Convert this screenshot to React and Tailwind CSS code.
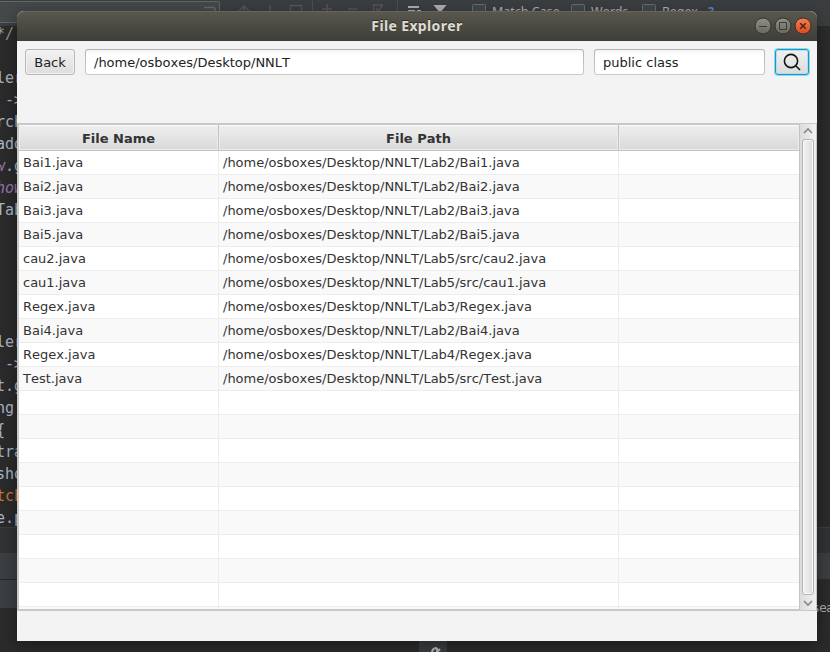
import React from "react";

const codeLines = [
  ["*/", "text-[#8f9a8c]"],
  ["", ""],
  ["ler", "text-[#a9b7c6]"],
  [" ->", "text-[#a9b7c6]"],
  ["rch", "text-[#a9b7c6]"],
  ["add", "text-[#a9b7c6]"],
  ["w.g", "text-[#a9b7c6]", "text-[#9876aa]"],
  ["how", "text-[#9876aa] italic"],
  ["Tab", "text-[#a9b7c6]"],
  ["", ""],
  ["", ""],
  ["", ""],
  ["", ""],
  ["", ""],
  ["ler", "text-[#a9b7c6]"],
  [" ->", "text-[#a9b7c6]"],
  ["t.g", "text-[#a9b7c6]"],
  ["ng", "text-[#a9b7c6]"],
  ["{", "text-[#a9b7c6]"],
  ["tra", "text-[#a9b7c6]"],
  ["sho", "text-[#a9b7c6]"],
  ["tch", "text-[#cc7832]"],
  ["e.p", "text-[#a9b7c6]"],
];

const files = [
  ["Bai1.java", "/home/osboxes/Desktop/NNLT/Lab2/Bai1.java"],
  ["Bai2.java", "/home/osboxes/Desktop/NNLT/Lab2/Bai2.java"],
  ["Bai3.java", "/home/osboxes/Desktop/NNLT/Lab2/Bai3.java"],
  ["Bai5.java", "/home/osboxes/Desktop/NNLT/Lab2/Bai5.java"],
  ["cau2.java", "/home/osboxes/Desktop/NNLT/Lab5/src/cau2.java"],
  ["cau1.java", "/home/osboxes/Desktop/NNLT/Lab5/src/cau1.java"],
  ["Regex.java", "/home/osboxes/Desktop/NNLT/Lab3/Regex.java"],
  ["Bai4.java", "/home/osboxes/Desktop/NNLT/Lab2/Bai4.java"],
  ["Regex.java", "/home/osboxes/Desktop/NNLT/Lab4/Regex.java"],
  ["Test.java", "/home/osboxes/Desktop/NNLT/Lab5/src/Test.java"],
];
const rows = Array.from({ length: 20 }, (_, i) => files[i] || ["", ""]);

function EditorToolbar() {
  return (
    <div className="relative h-[26px] bg-[#3c3f41]">
      <div className="h-[22px] w-[220px] translate-y-px rounded-r-[2px] border border-l-0 border-[#646769] bg-[#45494a]" />
      <svg className="absolute inset-0" width="830" height="26" fill="none" stroke="#55585a" strokeWidth="1.5">
        <path d="M204 7.5h9q2 0 2 2v4" stroke="#686b6d" />
        <path d="M244 14V6m-5 5 5-5 5 5M270 5v9M290.500 14V5.500h11V14M327 4v9M322 9h10M348 9h10M382 6.500V5h-8.500v9M376 8l2 3 5-6" />
        <path d="M312.500 1v12M397.500 1v12" stroke="#505355" strokeWidth="1" />
        <path d="M408 7h11M408 11h7M417 11h4" stroke="#afb1b3" strokeWidth="2" />
        <path d="M433.500 5h13l-6.500 8z" fill="#afb1b3" stroke="none" />
        <g fill="#43494a" stroke="#6b6e70" strokeWidth="1">
          <rect x="472.500" y="4.500" width="13" height="13" rx="1" />
          <rect x="571.500" y="4.500" width="13" height="13" rx="1" />
          <rect x="642.500" y="4.500" width="13" height="13" rx="1" />
        </g>
      </svg>
      <div className="absolute left-[492px] top-[4px] flex whitespace-nowrap font-['Noto_Sans'] text-[12.5px] leading-[16px] text-[#b0b2b3]">
        <span className="w-[99px]">Match Case</span>
        <span className="w-[71px]">Words</span>
        <span className="w-[46px]">Regex</span>
        <span className="font-bold text-[#4a88d8]">?</span>
      </div>
    </div>
  );
}

function Editor() {
  return (
    <div className="flex h-[652px] w-[830px] flex-col bg-[#2b2b2b]">
      <EditorToolbar />
      <div className="h-[501px] w-[60px]">
        <div className="-ml-1 -mt-[3px] font-['DejaVu_Sans_Mono'] text-[15px] leading-[22px]">
          {codeLines.map(([text, color, first], i) => (
            <div key={i} className={`h-[22px] whitespace-pre ${color}`}>
              {first ? (
                <>
                  <span className={`italic ${first}`}>{text[0]}</span>
                  {text.slice(1)}
                </>
              ) : (
                text
              )}
            </div>
          ))}
        </div>
      </div>
      <div className="h-[26px] border-t border-[#3e3e3e] bg-[#313335]" />
      <div className="h-[26px] bg-[#3c4043]" />
      <div className="flex h-[29px]">
        <div className="w-[100px] border-t border-[#292929] bg-[#3c4043]" />
        <div className="flex-1 bg-[#2b2b2b]" />
      </div>
      <div className="flex h-[44px] justify-center pl-[36px]">
        <div className="flex w-[28px] justify-center bg-[#3b3e40] pl-[6px] pt-[39px]">
          <svg width="10" height="12" viewBox="0 0 10 12" fill="none" stroke="#b5b6b7" strokeWidth="2">
            <path d="M6 1Q1 1 1 6v5M6 1v3M9 2 6 5l2 2" />
          </svg>
        </div>
      </div>
      <span className="absolute left-[812px] top-[599px] font-['DejaVu_Sans_Mono'] text-[13px] leading-[18px] tracking-[-0.8px] text-[#a9adb0]">
        sea
      </span>
    </div>
  );
}

function TitleBar() {
  return (
    <div className="relative flex h-[30px] items-center justify-center rounded-t-[7px] border-t border-[#67655a] bg-linear-to-b from-[#59574d] to-[#3e3d38] pb-[2px]">
      <span className="font-['Noto_Sans'] text-[14px] font-bold leading-[18px] tracking-[0.36px] text-[#dfdbd2] [text-shadow:0_-1px_0_#2b2a26]">
        File Explorer
      </span>
      <svg className="absolute right-[5px] top-[5px]" width="58" height="18" fill="none">
        <defs>
          <linearGradient id="grey" x1="0" y1="0" x2="0" y2="1">
            <stop offset="0" stopColor="#918f88" />
            <stop offset="1" stopColor="#67665f" />
          </linearGradient>
          <linearGradient id="orange" x1="0" y1="0" x2="0" y2="1">
            <stop offset="0" stopColor="#f37e5a" />
            <stop offset="1" stopColor="#de4816" />
          </linearGradient>
        </defs>
        <circle cx="9" cy="9" r="8" fill="url(#grey)" stroke="#34332e" />
        <circle cx="29" cy="9" r="8" fill="url(#grey)" stroke="#34332e" />
        <circle cx="49" cy="9" r="8" fill="url(#orange)" stroke="#34332e" />
        <path d="M5 9.500h8M25.500 5.500h7v7h-7z" stroke="#3b3a35" />
        <path d="m46.200 6.200 5.600 5.600m0-5.600-5.600 5.600" stroke="#4a2718" strokeWidth="1.500" />
      </svg>
    </div>
  );
}

function Field({ text, className }) {
  return (
    <div className={`h-[26px] rounded-[3px] bg-linear-to-b from-[#b5b5b5] to-[#cbcbcb] p-px ${className}`}>
      <div className="h-full rounded-[2px] bg-white bg-linear-to-b from-[#f3f3f3] to-[#ffffff] to-20% pl-2 leading-[25px] text-[#222]">
        {text}
      </div>
    </div>
  );
}

function HeaderCell({ text, className }) {
  return (
    <div className={`border-b border-r border-[#c3c3c3] ${className}`}>
      <div className="h-[25px] border border-[#ececec] border-t-[#fbfbfb] bg-linear-to-b from-[#eeeeee] to-[#dadada] text-center font-bold leading-[25px] text-[#333]">
        {text}
      </div>
    </div>
  );
}

function ScrollBar() {
  return (
    <div className="flex w-[16px] flex-col items-center bg-linear-to-r from-[#dcdcdc] to-[#f0f0f0]">
      <svg width="16" height="15" fill="none" stroke="#868686" strokeWidth="1.600">
        <path d="m4 9 4-4 4 4" />
      </svg>
      <div className="w-[12px] flex-1 rounded-[3px] border border-[#b3b3b3] bg-linear-to-r from-[#f3f3f3] to-[#dcdcdc] shadow-[inset_0_0_0_1px_#fafafa]" />
      <svg width="16" height="15" fill="none" stroke="#868686" strokeWidth="1.600">
        <path d="m4 6 4 4 4-4" />
      </svg>
    </div>
  );
}

function FileTable() {
  return (
    <div className="flex h-[488px] border border-[#c8c8c8]">
      <div className="flex h-[486px] w-[782px] flex-col border border-r-0 border-[#c8c8c8]">
        <div className="flex h-[26px] shrink-0">
          <HeaderCell text="File Name" className="w-[200px]" />
          <HeaderCell text="File Path" className="w-[400px]" />
          <HeaderCell text="" className="w-[181px]" />
        </div>
        <div className="flex-1 overflow-hidden border-r border-[#c3c3c3]">
          {rows.map(([name, path], i) => (
            <div
              key={i}
              className="flex h-[24px] border-b border-[#ededed] leading-[23px] text-[#333] odd:bg-white even:bg-[#f9f9f9]"
            >
              <div className="w-[200px] border-r border-[#ededed] pl-1">{name}</div>
              <div className="w-[400px] border-r border-[#ededed] pl-1">{path}</div>
            </div>
          ))}
        </div>
      </div>
      <ScrollBar />
    </div>
  );
}

export default function App() {
  return (
    <div className="relative h-[652px] w-[830px] overflow-hidden">
      <Editor />
      <div className="absolute left-[17px] top-[11px] h-[630px] w-[800px] rounded-t-[7px] bg-[#f3f3f3] font-['DejaVu_Sans'] text-[13px] shadow-[0_4px_18px_rgba(0,0,0,0.4)] [font-kerning:none]">
        <TitleBar />
        <div className="flex h-[82px] gap-[10px] px-2 pt-2">
          <button className="h-[26px] w-[50px] rounded-[3px] border border-[#b7b7b7] bg-linear-to-b from-[#f2f2f2] to-[#dddddd] pt-px leading-[24px] text-[#222] shadow-[inset_0_0_0_1px_#f3f3f3]">
            Back
          </button>
          <Field text="/home/osboxes/Desktop/NNLT" className="w-[499px]" />
          <Field text="public class" className="w-[171px]" />
          <button className="flex h-[26px] w-[34px] items-center justify-center rounded-[3px] border border-[#039ed3] bg-linear-to-b from-[#f0f0f0] to-[#dcdcdc] shadow-[0_0_0_1px_#9bd3e7,inset_0_0_0_1px_#b8dce8]">
            <svg width="18" height="18" fill="none" stroke="#161616" strokeWidth="1.600">
              <circle cx="8" cy="8" r="6.600" />
              <path d="m12.500 12.500 4.500 4.500" />
            </svg>
          </button>
        </div>
        <FileTable />
      </div>
    </div>
  );
}
